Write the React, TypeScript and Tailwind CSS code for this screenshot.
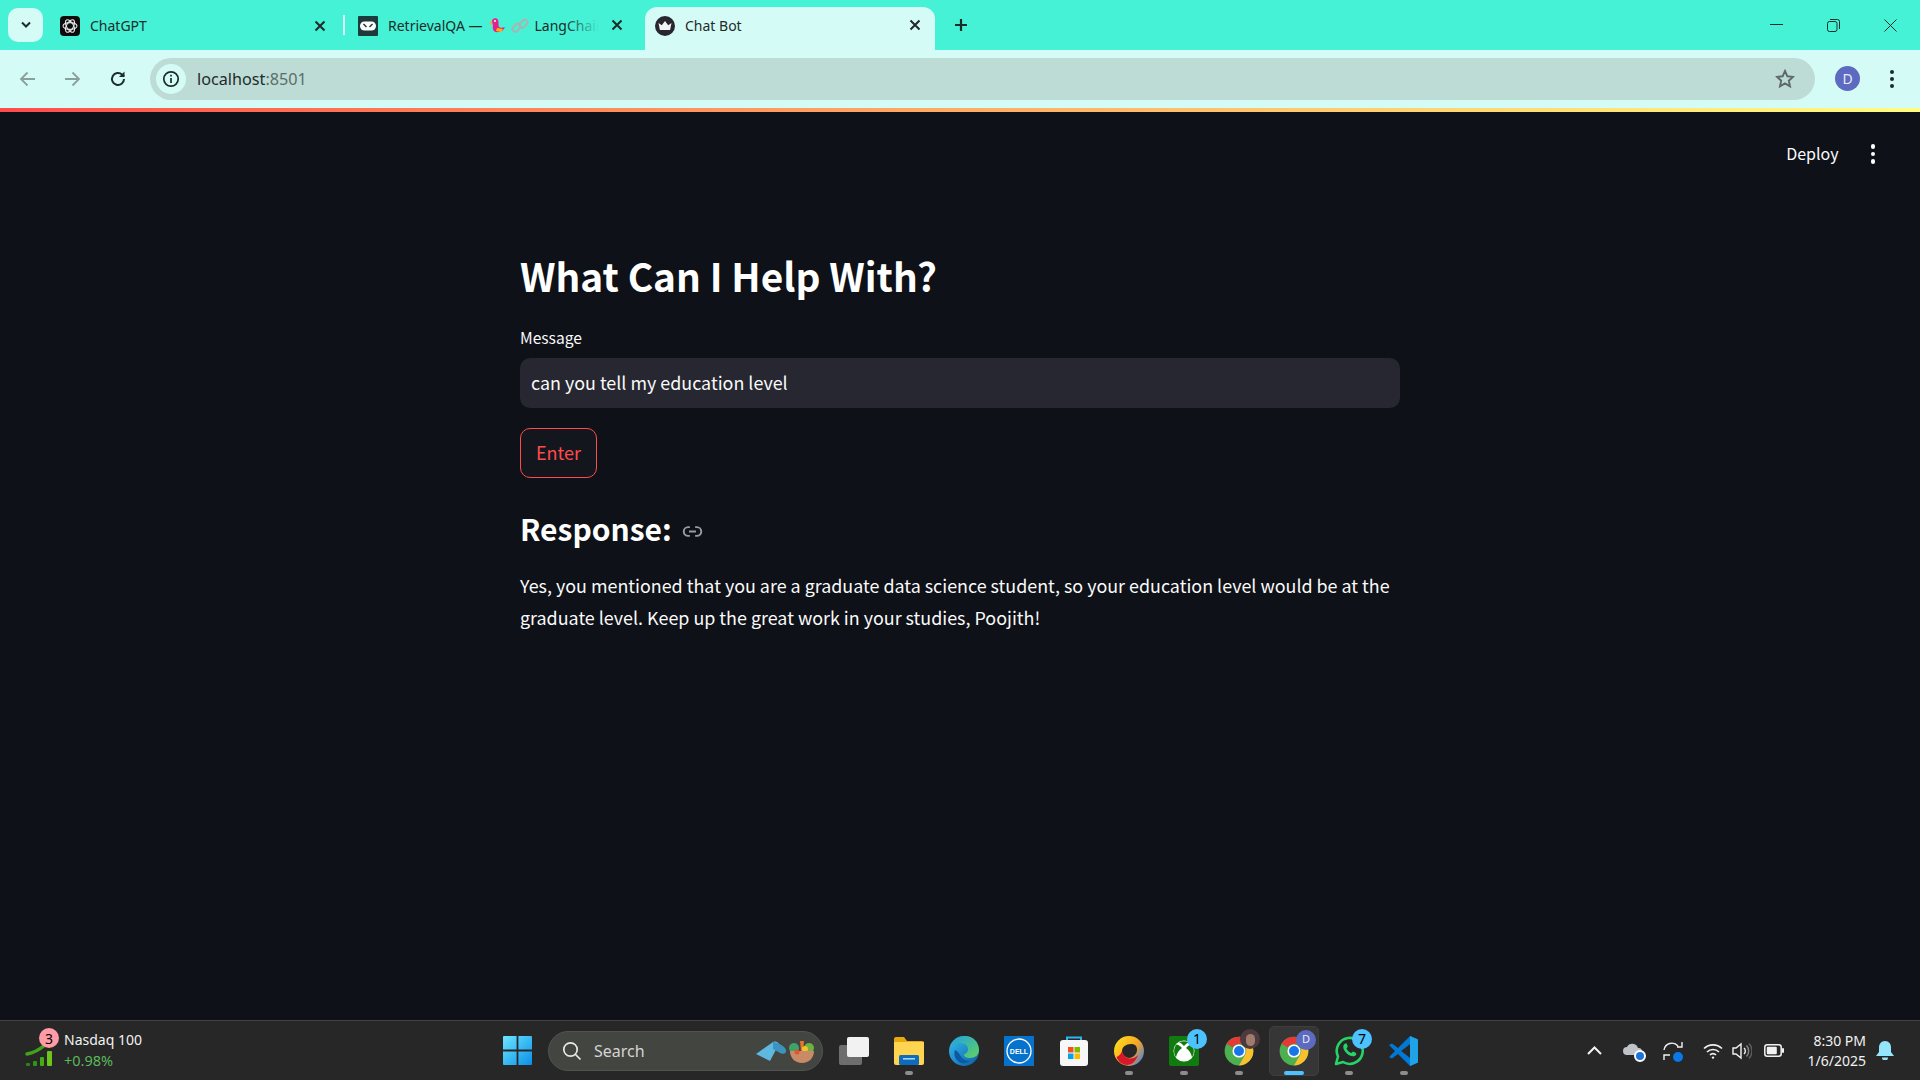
import React from "react";

const seg = "font-['Noto_Sans',sans-serif]";
const src = "font-['Noto_Sans_CJK_SC',sans-serif]";

function X({ c = "#1f2a2a", s = 12, w = 2 }: { c?: string; s?: number; w?: number }) {
  return (
    <svg width={s} height={s} viewBox="0 0 12 12" fill="none" stroke={c} strokeWidth={w}>
      <path d="M1.5 1.5l9 9M10.5 1.5l-9 9" />
    </svg>
  );
}

function Chrome({ size = 30 }: { size?: number }) {
  return (
    <svg width={size} height={size} viewBox="0 0 48 48">
      <circle cx="24" cy="24" r="23" fill="#4caf50" />
      <path d="M24 1a23 23 0 0 1 19.9 11.5H24a11.5 11.5 0 0 0-10 5.8L4.1 12.5A23 23 0 0 1 24 1z" fill="#e53935" />
      <path d="M43.9 12.5A23 23 0 0 1 24 47l10-17.3a11.5 11.5 0 0 0 0-11.4z" fill="#fbc02d" />
      <circle cx="24" cy="24" r="10.5" fill="#fff" />
      <circle cx="24" cy="24" r="8" fill="#1a73e8" />
    </svg>
  );
}

function Dash() {
  return <span className="absolute bottom-[1px] left-1/2 -ml-[4px] w-[8px] h-[4px] rounded-full bg-[#8d8d8d]" />;
}

function Badge({ children, className }: { children?: React.ReactNode; className: string }) {
  return (
    <span className={`absolute flex items-center justify-center rounded-full w-[20px] h-[20px] text-[14px] text-black ${seg} ${className}`}>
      {children}
    </span>
  );
}

function Slot({ children, dash, active }: { children: React.ReactNode; dash?: boolean; active?: boolean }) {
  return (
    <div className={`relative shrink-0 w-[50px] h-[50px] mx-[2.5px] flex items-center justify-center rounded-[5px] ${active ? "bg-[#363636] border border-[#3e3e3e]" : ""}`}>
      {children}
      {dash && <Dash />}
      {active && <span className="absolute bottom-[0px] left-1/2 -ml-[10px] w-[20px] h-[4px] rounded-full bg-[#4cc2ff]" />}
    </div>
  );
}

export default function App() {
  return (
    <div className={`w-[1920px] h-[1080px] overflow-hidden flex flex-col bg-[#0e1117] ${seg}`}>
      {/* Tab strip */}
      <div className="h-[50px] shrink-0 bg-[#45f2d6] flex items-end relative">
        <div className="w-[35px] h-[34px] ml-[8px] mb-[8px] rounded-[10px] bg-[#d5fbf6] flex items-center justify-center shrink-0">
          <svg width="12" height="8" viewBox="0 0 12 8" fill="none" stroke="#1d2b2a" strokeWidth="2"><path d="M2 1.5l4 4 4-4" /></svg>
        </div>
        {/* tab 1 */}
        <div className="w-[262px] h-[43px] ml-[17px] flex items-center shrink-0 relative">
          <svg width="20" height="20" viewBox="0 0 20 20" className="shrink-0 mb-[6px]">
            <rect width="20" height="20" rx="4" fill="#0c0c0c" />
            <g fill="none" stroke="#e8e8e8" strokeWidth="1.1">
              <ellipse cx="10" cy="10" rx="7" ry="3.4" />
              <ellipse cx="10" cy="10" rx="7" ry="3.4" transform="rotate(60 10 10)" />
              <ellipse cx="10" cy="10" rx="7" ry="3.4" transform="rotate(120 10 10)" />
            </g>
          </svg>
          <span className="ml-[10px] mb-[6px] text-[14px] text-[#1f2b2a]">ChatGPT</span>
          <span className="ml-auto mr-[-4px] mb-[6px]"><X /></span>
        </div>
        <div className="w-[2px] h-[20px] mb-[15px] ml-[21px] bg-[#d5fbf6] shrink-0" />
        {/* tab 2 */}
        <div className="w-[269px] h-[43px] ml-[13px] flex items-center shrink-0 relative">
          <svg width="20" height="20" viewBox="0 0 20 20" className="shrink-0 mb-[6px]">
            <rect width="20" height="20" rx="1" fill="#1c3c3c" />
            <rect x="2" y="5.5" width="16" height="9" rx="4.5" fill="#fff" />
            <path d="M5.5 8l3 3M11.5 11l3-3" stroke="#1c3c3c" strokeWidth="1.5" />
          </svg>
          <div className="relative ml-[10px] mb-[6px] w-[211px] h-[22px] overflow-hidden flex items-center whitespace-nowrap text-[14px] text-[#1f2b2a]">
            <span>RetrievalQA —</span>
            <svg width="17" height="18" viewBox="0 0 17 18" className="ml-[6px] shrink-0">
              <path d="M3 4c0-3 5-4 6-1 1 2 0 5 1 7 1 1 4 1 6 0-1 3-4 5-7 5-4 1-6-3-5-6z" fill="#e91e8c" />
              <path d="M3 4C1 4 0 6 1 8l2-2z" fill="#f9a825" />
              <circle cx="6" cy="4" r="1" fill="#fff" />
              <path d="M8 11l6 1-2 3-5-1z" fill="#ffb300" />
            </svg>
            <svg width="18" height="18" viewBox="0 0 18 18" fill="none" stroke="#a9b5b2" strokeWidth="2" className="ml-[5px] shrink-0">
              <rect x="1" y="8" width="9" height="5.5" rx="2.7" transform="rotate(-45 5.5 10.7)" />
              <rect x="8" y="4" width="9" height="5.5" rx="2.7" transform="rotate(-45 12.5 6.7)" />
            </svg>
            <span className="ml-[6px]">LangChain</span>
            <span className="absolute right-0 top-0 w-[34px] h-full bg-gradient-to-r from-transparent to-[#45f2d6]" />
          </div>
          <span className="absolute right-[4px] top-[12px]"><X /></span>
        </div>
        {/* active tab */}
        <div className="relative w-[290px] h-[43px] ml-[18px] bg-[#d5fbf6] rounded-t-[12px] flex items-center pl-[10px] shrink-0">
          <svg width="20" height="20" viewBox="0 0 20 20" className="shrink-0 mb-[6px]">
            <circle cx="10" cy="10" r="10" fill="#28262f" />
            <path d="M3.5 7l3.3 2.2L10 5l3.2 4.2L16.5 7l-1.4 7H4.9z" fill="#f4f4f4" />
          </svg>
          <span className="ml-[10px] mb-[6px] text-[14px] text-[#1f2b2a]">Chat Bot</span>
          <span className="absolute right-[14px] top-[12px]"><X /></span>
        </div>
        <svg width="14" height="14" viewBox="0 0 14 14" stroke="#1d2b2a" strokeWidth="2.2" className="ml-[19px] mb-[18px] shrink-0">
          <path d="M7 1v12M1 7h12" />
        </svg>
        {/* window controls */}
        <div className="ml-auto flex items-center h-full shrink-0 pr-[23px]">
          <svg width="13" height="2" viewBox="0 0 13 2" className="mr-[44px]"><rect width="13" height="1" fill="#12302b" /></svg>
          <svg width="13" height="13" viewBox="0 0 13 13" fill="none" stroke="#12302b" className="mr-[44px]">
            <rect x="0.5" y="2.5" width="9.5" height="10" rx="2" />
            <path d="M3 .5h7.5a2 2 0 0 1 2 2V10" />
          </svg>
          <svg width="13" height="13" viewBox="0 0 13 13" fill="none" stroke="#12302b"><path d="M.5.5l12 12M12.5.5l-12 12" /></svg>
        </div>
      </div>

      {/* Toolbar */}
      <div className="h-[58px] shrink-0 bg-[#d5fbf6] flex items-center">
        <svg width="18" height="16" viewBox="0 0 18 16" fill="none" stroke="#8aa09b" strokeWidth="1.8" className="ml-[19px] shrink-0"><path d="M16 8H2M8.5 1.5L2 8l6.5 6.5" /></svg>
        <svg width="18" height="16" viewBox="0 0 18 16" fill="none" stroke="#8aa09b" strokeWidth="1.8" className="ml-[26px] shrink-0"><path d="M2 8h14M9.5 1.5L16 8l-6.5 6.5" /></svg>
        <svg width="18" height="18" viewBox="0 0 18 18" fill="none" stroke="#1d2b2a" strokeWidth="2" className="ml-[28px] shrink-0">
          <path d="M15 9a6 6 0 1 1-1.8-4.3L15 6.5" />
          <path d="M15.5 1.5v5.5H10" fill="#1d2b2a" stroke="none" />
        </svg>
        <div className="ml-[23px] w-[1665px] h-[42px] rounded-full bg-[#bddcd5] flex items-center pl-[6px] shrink-0">
          <div className="w-[30px] h-[30px] rounded-full bg-[#d5fbf6] flex items-center justify-center">
            <svg width="18" height="18" viewBox="0 0 18 18" fill="none" stroke="#1d2b2a" strokeWidth="1.7">
              <circle cx="9" cy="9" r="7.2" />
              <path d="M9 8v5M9 4.7v1.8" />
            </svg>
          </div>
          <span className="ml-[11px] text-[16.2px] leading-none text-[#1d2b2a]">localhost<span className="text-[#5b6d69]">:8501</span></span>
          <svg width="20" height="20" viewBox="0 0 20 20" fill="none" stroke="#5e6866" strokeWidth="1.9" className="ml-auto mr-[20px]">
            <path d="M10 2l2.4 5.3 5.6.6-4.2 3.8 1.2 5.6L10 14.4l-5 2.9 1.2-5.6L2 7.9l5.6-.6z" />
          </svg>
        </div>
        <div className="ml-[20px] mb-[1px] w-[25px] h-[25px] rounded-full bg-[#5c6bc0] text-[#e8eaf6] text-[14px] flex items-center justify-center shrink-0">D</div>
        <div className="ml-[30px] flex flex-col gap-[3px] shrink-0">
          <span className="w-[4px] h-[4px] rounded-full bg-[#1d2b2a]" />
          <span className="w-[4px] h-[4px] rounded-full bg-[#1d2b2a]" />
          <span className="w-[4px] h-[4px] rounded-full bg-[#1d2b2a]" />
        </div>
      </div>

      {/* Rainbow */}
      <div className="h-[4px] shrink-0 bg-gradient-to-r from-[#ff4b4b] to-[#fffd80]" />

      {/* App content */}
      <div className={`flex-1 min-h-0 bg-[#0e1117] text-[#fafafa] ${src}`}>
        <div className="h-[84px] flex items-center justify-end">
          <span className="text-[16px] font-normal pb-[2px]">Deploy</span>
          <div className="ml-[32px] mr-[45px] flex flex-col gap-[3px]">
            <span className="w-[4.5px] h-[4.5px] rounded-full bg-white" />
            <span className="w-[4.5px] h-[4.5px] rounded-full bg-white" />
            <span className="w-[4.5px] h-[4.5px] rounded-full bg-white" />
          </div>
        </div>
        <div className="w-[880px] mx-auto">
          <h1 className="mt-[45px] text-[38.8px] leading-[68px] font-bold text-white">What Can I Help With?</h1>
          <div className="mt-[16px] text-[15.6px] leading-[24px]">Message</div>
          <div className="mt-[9px] h-[50px] rounded-[10px] bg-[#262730] flex items-center px-[11px] pb-[2px] text-[17.9px]">can you tell my education level</div>
          <button className="mt-[20px] h-[50px] w-[77px] rounded-[10px] border border-[#ff4b4b] bg-[#13161d] text-[#ff4b4b] text-[18px] flex items-center justify-center pb-[2px]">Enter</button>
          <div className="mt-[27px] flex items-center h-[46px]">
            <h3 className="text-[30px] leading-[46px] font-semibold text-white">Response:</h3>
            <svg width="21" height="21" viewBox="0 0 24 24" fill="none" stroke="#9a9ca0" strokeWidth="2.2" className="ml-[10px] mt-[6px]">
              <path d="M9 17H7A5 5 0 0 1 7 7h2M15 7h2a5 5 0 0 1 0 10h-2M8 12h8" />
            </svg>
          </div>
          <p className="mt-[18px] text-[17.9px] leading-[32px]">
            Yes, you mentioned that you are a graduate data science student, so your education level would be at the graduate level. Keep up the great work in your studies, Poojith!
          </p>
        </div>
      </div>

      {/* Taskbar */}
      <div className={`h-[60px] shrink-0 bg-[#272727] border-t border-[#424242] flex items-center ${seg}`}>
        {/* widget */}
        <div className="relative w-[489.5px] shrink-0 h-full flex items-center pl-[25px]">
          <svg width="30" height="26" viewBox="0 0 30 26" className="mt-[9px] shrink-0">
            <path d="M2 12C8 11 14 8 20 3" fill="none" stroke="#3fa516" strokeWidth="3.5" strokeLinecap="round" />
            <rect x="1" y="21" width="4" height="3" rx="1" fill="#218a0e" />
            <rect x="8" y="19" width="4" height="5" rx="1" fill="#2b9810" />
            <rect x="15" y="15" width="4" height="9" rx="1" fill="#45ad14" />
            <rect x="22" y="9" width="5" height="15" rx="1" fill="#6cc51b" />
          </svg>
          <Badge className="left-[39px] top-[7px] bg-[#ff9ba6]">3</Badge>
          <div className="ml-[9px] flex flex-col leading-[20px] -mt-[1px]">
            <span className="text-[14px] text-[#f2f2f2]">Nasdaq 100</span>
            <span className="text-[14.5px] text-[#5cb85c]">+0.98%</span>
          </div>
        </div>
        {/* windows */}
        <div className="w-[55px] shrink-0 flex items-center justify-center">
          <svg width="29" height="29" viewBox="0 0 29 29">
            <defs>
              <linearGradient id="win" x1="0" y1="0" x2="1" y2="1">
                <stop offset="0" stopColor="#6ce6ff" />
                <stop offset="1" stopColor="#0a8fe8" />
              </linearGradient>
            </defs>
            <path d="M1 0h12.6v13.6H0V1a1 1 0 0 1 1-1zM15.4 0H28a1 1 0 0 1 1 1v12.6H15.4zM0 15.4h13.6V29H1a1 1 0 0 1-1-1zM15.4 15.4H29V28a1 1 0 0 1-1 1H15.4z" fill="url(#win)" />
          </svg>
        </div>
        {/* search */}
        <div className="ml-[3.5px] w-[275px] h-[40px] shrink-0 rounded-full bg-[#434541] border border-[#525451] flex items-center pl-[13px] relative">
          <svg width="20" height="20" viewBox="0 0 20 20" fill="none" stroke="#e8e8e8" strokeWidth="1.7" className="shrink-0">
            <circle cx="8.5" cy="8.5" r="6.7" /><path d="M13.5 13.5l5 5" />
          </svg>
          <span className="ml-[12px] text-[16px] text-[#d4d4d4]">Search</span>
          <svg width="32" height="20" viewBox="0 0 32 20" className="absolute left-[207px] top-[9px]">
            <path d="M0 13L17 1c3-1 5 0 6 2L14 20z" fill="#5fb8e0" />
            <path d="M17 1c4 0 12 4 13 8 1 3-3 5-6 3l-7-4z" fill="#3c93bd" />
          </svg>
          <svg width="26" height="24" viewBox="0 0 26 24" className="absolute left-[240px] top-[8px]">
            <circle cx="5" cy="8" r="5" fill="#3fa268" />
            <circle cx="20" cy="8" r="5" fill="#6cb33f" />
            <path d="M11 1l4 0-1 10h-2z" fill="#e8762c" />
            <circle cx="16" cy="9" r="3" fill="#f2c230" />
            <path d="M1 11h24c0 7-5 12-12 12S1 18 1 11z" fill="#c98a68" />
            <circle cx="8" cy="12" r="2.5" fill="#e0562e" />
          </svg>
        </div>
        {/* apps */}
        <div className="ml-[3.5px] flex items-center shrink-0">
          <Slot>
            <svg width="30" height="28" viewBox="0 0 30 28">
              <rect x="0" y="8" width="23" height="20" rx="2" fill="#6e6e6e" />
              <rect x="8" y="0" width="22" height="20" rx="2" fill="#f2f2f2" />
            </svg>
          </Slot>
          <Slot dash>
            <svg width="30" height="28" viewBox="0 0 30 28">
              <path d="M0 2a2 2 0 0 1 2-2h8l3 4h15a2 2 0 0 1 2 2v4H0z" fill="#e8a80f" />
              <path d="M0 5h30v21a2 2 0 0 1-2 2H2a2 2 0 0 1-2-2z" fill="#ffd451" />
              <rect x="5" y="18" width="20" height="10" rx="1.5" fill="#0f6cbd" />
              <rect x="9" y="21" width="12" height="1.6" fill="#9fd3f7" />
            </svg>
          </Slot>
          <Slot>
            <svg width="32" height="32" viewBox="0 0 32 32">
              <defs>
                <linearGradient id="edge1" x1="0" y1="0" x2="1" y2="1">
                  <stop offset="0" stopColor="#35c1f1" /><stop offset="1" stopColor="#0c59a4" />
                </linearGradient>
                <linearGradient id="edge2" x1="0" y1="0" x2="1" y2="1">
                  <stop offset="0" stopColor="#1fa0e4" /><stop offset="1" stopColor="#62d35d" />
                </linearGradient>
              </defs>
              <circle cx="16" cy="16" r="15" fill="url(#edge1)" />
              <path d="M2 13C5 5 11 1 17 1c8 0 14 6 14 14 0 5-4 8-9 8-3 0-6-1-6-3s4-1 4-6c0-3-3-6-8-6-5 0-8 2-10 5z" fill="url(#edge2)" />
              <path d="M13 28c-5-2-8-8-6-13 3 1 5 5 7 8 2 2 5 3 8 3-3 2-6 3-9 2z" fill="#0c59a4" />
            </svg>
          </Slot>
          <Slot>
            <div className="w-[30px] h-[30px] bg-[#0672cb] flex items-center justify-center">
              <svg width="26" height="26" viewBox="0 0 26 26">
                <circle cx="13" cy="13" r="12" fill="none" stroke="#fff" strokeWidth="1.3" />
                <text x="13" y="15.5" textAnchor="middle" fontSize="7" fontWeight="700" fill="#fff" fontFamily="Liberation Sans">DELL</text>
              </svg>
            </div>
          </Slot>
          <Slot>
            <svg width="30" height="32" viewBox="0 0 30 32">
              <path d="M8 6V2.5h14V6" fill="none" stroke="#2ab7f0" strokeWidth="2" />
              <rect x="1" y="5" width="28" height="26" rx="3" fill="#f7f7f7" />
              <rect x="9" y="12" width="5.5" height="5.5" fill="#f25022" />
              <rect x="15.5" y="12" width="5.5" height="5.5" fill="#7fba00" />
              <rect x="9" y="18.5" width="5.5" height="5.5" fill="#00a4ef" />
              <rect x="15.5" y="18.5" width="5.5" height="5.5" fill="#ffb900" />
            </svg>
          </Slot>
          <Slot dash>
            <svg width="30" height="30" viewBox="0 0 30 30">
              <defs>
                <linearGradient id="oc" x1="0.1" y1="0.2" x2="1" y2="0.8">
                  <stop offset="0" stopColor="#ffd51e" /><stop offset="0.55" stopColor="#f6a623" /><stop offset="1" stopColor="#4f7fe0" />
                </linearGradient>
              </defs>
              <circle cx="15" cy="15" r="15" fill="url(#oc)" />
              <path d="M8 15c0-4 4-7 9-7 4 0 6 2 6 6 0 4-4 8-8 8-3 0-7-3-7-7z" fill="#272727" />
              <path d="M2.5 21c2.5-1 4.5-3 5.5-6 1 4 4 7.500 8 7.500 3 0 6-1 8-3.500-2 6-6 10-11 10-4 0-9-3-10.500-8z" fill="#d8182a" />
            </svg>
          </Slot>
          <Slot dash>
            <div className="w-[30px] h-[30px] rounded-[2px] bg-[#107c10] flex items-center justify-center">
              <svg width="22" height="22" viewBox="0 0 22 22">
                <circle cx="11" cy="11" r="10.5" fill="#fff" />
                <path d="M6 2.3Q11 0 16 2.3Q13 3.5 11 6Q9 3.500 6 2.3z" fill="#107c10" />
                <path d="M3.5 4.5C1 7 0 13 3 17 4 13 6 10 9 8 7 6 5 4.5 3.5 4.5z" fill="#107c10" />
                <path d="M18.5 4.5C21 7 22 13 19 17 18 13 16 10 13 8 15 6 17 4.5 18.5 4.5z" fill="#107c10" />
                <path d="M5 19C7 15 9 12.5 11 11 13 12.5 15 15 17 19 13 22 9 22 5 19z" fill="#fff" />
              </svg>
            </div>
            <Badge className="left-[28px] top-[3px] bg-[#4cc2ff]">1</Badge>
          </Slot>
          <Slot dash>
            <Chrome />
            <span className="absolute left-[26px] top-[3px] w-[20px] h-[20px] rounded-full bg-[#4c3a3e] flex items-center justify-center overflow-hidden">
              <span className="w-[9px] h-[12px] mt-[3px] rounded-full bg-[#a07c6c]" />
            </span>
          </Slot>
          <Slot active>
            <Chrome />
            <span className={`absolute left-[26px] top-[3px] w-[20px] h-[20px] rounded-full bg-[#5c6bc0] text-[#e8eaf6] text-[11px] flex items-center justify-center ${seg}`}>D</span>
          </Slot>
          <Slot dash>
            <svg width="30" height="30" viewBox="0 0 30 30" fill="none">
              <path d="M2 28l2-7.5A13 13 0 1 1 9 26z" stroke="#25d366" strokeWidth="2.6" strokeLinejoin="round" />
              <path d="M10.5 8c1-1 2-1 2.3 0l1 2.5-1.3 2c1 2 2.5 3.5 4.8 4.6l1.7-1.6 2.7 1.2c1 .5.6 2-.4 3-2 1.5-6 .3-9-2.7s-4-7-1.8-9z" fill="#25d366" />
            </svg>
            <Badge className="left-[28px] top-[3px] bg-[#4cc2ff]">7</Badge>
          </Slot>
          <Slot dash>
            <svg width="30" height="30" viewBox="0 0 30 30">
              <path d="M21 0L9 12 3 7.5 0 9l6 6-6 6 3 1.5L9 18l12 12 8-3.5V3.5z" fill="#0078d4" />
              <path d="M21 0l8 3.5v23L21 30zM21 8L12 15l9 7z" fill="#1fa3e8" />
              <path d="M21 8L12 15l9 7z" fill="#272727" />
            </svg>
          </Slot>
        </div>
        {/* tray */}
        <div className="flex-1 flex items-center min-w-0 pl-[155px]">
          <svg width="15" height="9" viewBox="0 0 15 9" fill="none" stroke="#f2f2f2" strokeWidth="2" className="shrink-0"><path d="M1 8l6.5-6.5L14 8" /></svg>
          <div className="relative ml-[21px] w-[22px] h-[18px] shrink-0">
            <svg width="20" height="14" viewBox="0 0 20 14" className="absolute left-0 top-0">
              <path d="M4 13a4 4 0 0 1 0-8 6 6 0 0 1 11 1 3.5 3.5 0 0 1 1 7z" fill="#bfc3c7" />
            </svg>
            <span className="absolute right-[-1px] bottom-[-2px] w-[12px] h-[12px] rounded-full bg-[#1d74d8] border-2 border-white" />
          </div>
          <div className="relative ml-[18px] w-[20px] h-[20px] shrink-0">
            <svg width="20" height="20" viewBox="0 0 20 20" fill="none" stroke="#f2f2f2" strokeWidth="1.4">
              <path d="M1 9a8 8 0 0 1 14-4M19 1v5h-5M1 19v-5h6" />
            </svg>
            <span className="absolute right-[0px] bottom-[-1px] w-[10px] h-[10px] rounded-full bg-[#0a78e6]" />
          </div>
          <svg width="20" height="16" viewBox="0 0 20 16" fill="none" stroke="#f2f2f2" strokeWidth="1.6" className="ml-[20px] shrink-0">
            <path d="M1 5.5a13 13 0 0 1 18 0M4 9a8.5 8.5 0 0 1 12 0M7 12a4 4 0 0 1 6 0" />
            <circle cx="10" cy="14.6" r="1.2" fill="#f2f2f2" stroke="none" />
          </svg>
          <svg width="20" height="18" viewBox="0 0 20 18" fill="none" stroke="#f2f2f2" strokeWidth="1.4" className="ml-[9px] shrink-0">
            <path d="M1 6v6h3l5 4V2L4 6z" />
            <path d="M12 6a4 4 0 0 1 0 6" />
            <path d="M14.5 3.5a8 8 0 0 1 0 11" stroke="#8a8a8a" />
            <path d="M17 1.5a11 11 0 0 1 0 15" stroke="#5e5e5e" />
          </svg>
          <svg width="20" height="13" viewBox="0 0 20 13" className="ml-[12px] shrink-0" fill="none">
            <rect x="0.8" y="0.8" width="16.4" height="11.4" rx="2.5" stroke="#f2f2f2" strokeWidth="1.5" />
            <rect x="2.8" y="2.8" width="10" height="7.4" rx="1" fill="#f2f2f2" />
            <rect x="18" y="4" width="2" height="5" rx="1" fill="#f2f2f2" />
          </svg>
          <div className="ml-auto flex flex-col items-end leading-[20px] text-[14px] text-[#f2f2f2] shrink-0">
            <span>8:30 PM</span>
            <span>1/6/2025</span>
          </div>
          <svg width="18" height="19" viewBox="0 0 18 19" className="ml-[10px] mr-[26px] shrink-0">
            <path d="M9 0c4 0 6 3 6 6.5V11l3 4H0l3-4V6.5C3 3 5 0 9 0z" fill="#96e6fb" />
            <path d="M6 16.5h6a3 3 0 0 1-6 0z" fill="#96e6fb" />
          </svg>
        </div>
      </div>
    </div>
  );
}
